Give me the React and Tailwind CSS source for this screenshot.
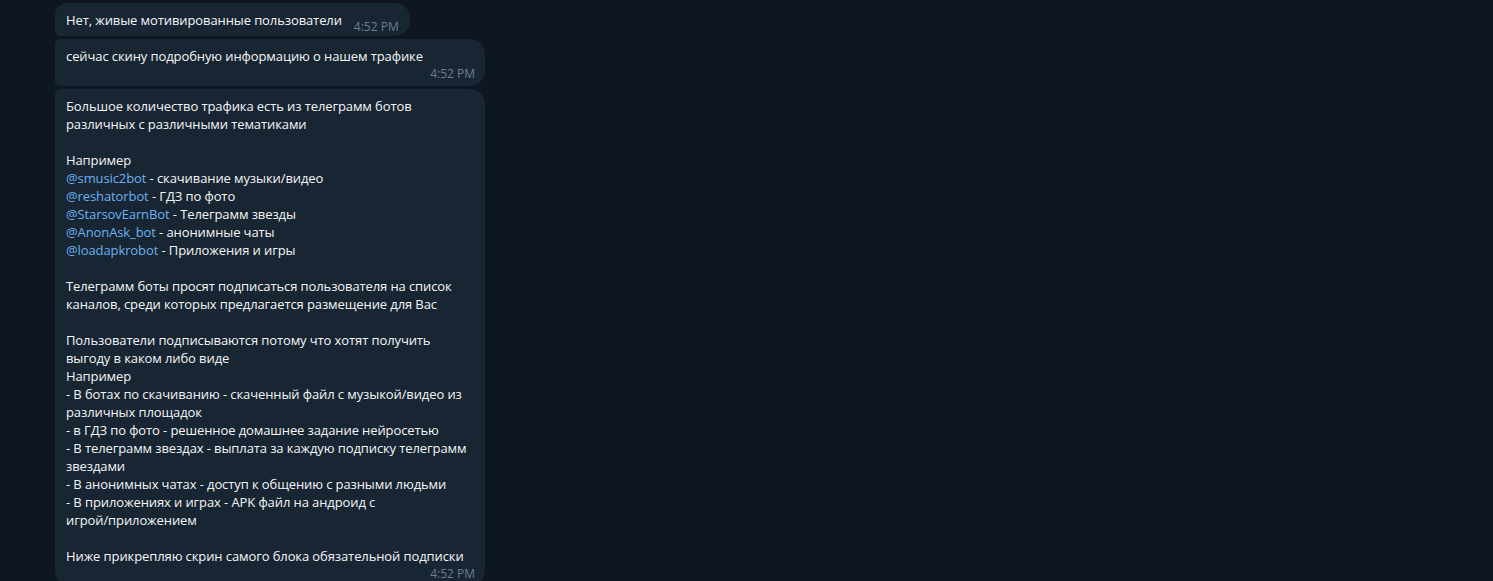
import React from "react";

const font = { fontFamily: '"Open Sans", "Noto Sans", sans-serif' };

function Time() {
  return (
    <div className="text-[12px] leading-[17px] tracking-normal text-[#6d7f8f] whitespace-nowrap">4:52 PM</div>
  );
}

function L({ children }) {
  return <span className="text-[#6ab2f2]">{children}</span>;
}

const lines = [
  "Большое количество трафика есть из телеграмм ботов",
  "различных с различными тематиками",
  "",
  "Например",
  [<L key="a">@smusic2bot</L>, " - скачивание музыки/видео"],
  [<L key="a">@reshatorbot</L>, " - ГДЗ по фото"],
  [<L key="a">@StarsovEarnBot</L>, " - Телеграмм звезды"],
  [<L key="a">@AnonAsk_bot</L>, " - анонимные чаты"],
  [<L key="a">@loadapkrobot</L>, " - Приложения и игры"],
  "",
  "Телеграмм боты просят подписаться пользователя на список",
  "каналов, среди которых предлагается размещение для Вас",
  "",
  "Пользователи подписываются потому что хотят получить",
  "выгоду в каком либо виде",
  "Например",
  "- В ботах по скачиванию - скаченный файл с музыкой/видео из",
  "различных площадок",
  "- в ГДЗ по фото - решенное домашнее задание нейросетью",
  "- В телеграмм звездах - выплата за каждую подписку телеграмм",
  "звездами",
  "- В анонимных чатах - доступ к общению с разными людьми",
  "- В приложениях и играх - APK файл на андроид с",
  "игрой/приложением",
  "",
  "Ниже прикрепляю скрин самого блока обязательной подписки",
];

export default function App() {
  return (
    <div
      className="w-[1493px] h-[581px] overflow-hidden bg-[#0e1621] text-[#f5f5f5] text-[13px] leading-[18px] tracking-[-0.1px]"
      style={font}
    >
      <div className="flex flex-col items-start gap-[3px] pl-[55px] pt-[3px]">
        <div className="flex items-end gap-[12px] bg-[#182533] rounded-tl-[12px] rounded-bl-[5px] rounded-r-[15px] pl-[11px] pr-[11px] pt-[8px] pb-[7px]">
          <div className="whitespace-nowrap">Нет, живые мотивированные пользователи</div>
          <div className="mb-[-6px]">
            <Time />
          </div>
        </div>
        <div className="w-[430px] flex flex-col bg-[#182533] rounded-l-[5px] rounded-r-[15px] pl-[11px] pr-[10px] pt-[8px] pb-[4px]">
          <div className="whitespace-nowrap">сейчас скину подробную информацию о нашем трафике</div>
          <div className="flex justify-end">
            <Time />
          </div>
        </div>
        <div className="w-[430px] flex flex-col bg-[#182533] rounded-tl-[5px] rounded-bl-[15px] rounded-r-[15px] pl-[11px] pr-[10px] pt-[8px] pb-[4px]">
          {lines.map((l, i) => (
            <div key={i} className="whitespace-nowrap h-[18px]">
              {l}
            </div>
          ))}
          <div className="flex justify-end">
            <Time />
          </div>
        </div>
      </div>
    </div>
  );
}
